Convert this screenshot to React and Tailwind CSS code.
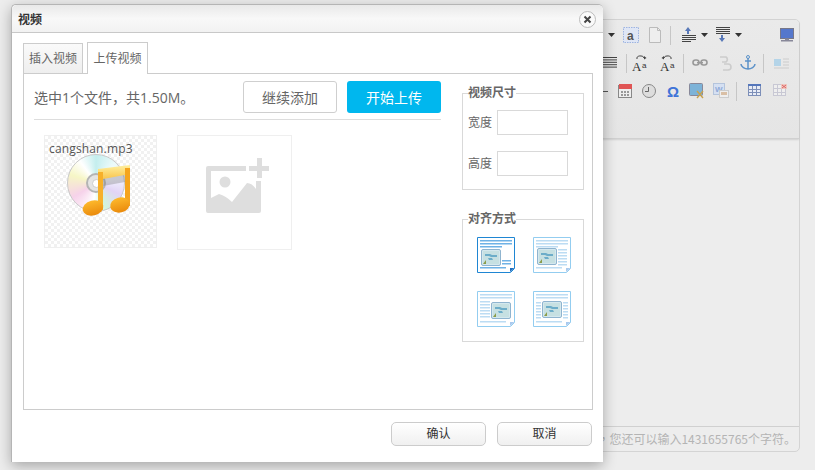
const Sep = ({ className = "" }) => <div className={`w-px h-[19px] bg-[#c6c6c6] shrink-0 ${className}`} />;

const Caret = ({ className = "" }) => (
  <svg width="7" height="4" viewBox="0 0 7 4" className={`shrink-0 ${className}`}><path d="M0 0h7L3.5 4z" fill="#333" /></svg>
);

const I = ({ className = "", children, w = 16, h = 16 }) => (
  <svg width={w} height={h} viewBox={`0 0 ${w} ${h}`} className={`shrink-0 ${className}`}>{children}</svg>
);

const Lines = ({ x = 0, y = 0, w = 14, n = 4, gap = 2, color = "#444" }) => (
  <g fill={color}>{Array.from({ length: n }).map((_, i) => <rect key={i} x={x} y={y + i * gap} width={w} height="1" />)}</g>
);

const AaIcon = ({ flip, className = "" }) => (
  <svg width="16" height="20" viewBox="0 0 16 20" className={`shrink-0 ${className}`}>
    <path d={flip ? "M4 5 a3.5 2.6 0 0 1 7 1" : "M12 5 a3.5 2.6 0 0 0 -7 1"} fill="none" stroke="#444" strokeWidth="1" />
    <path d={flip ? "M4 3v3.5l-2.5-1.5z" : "M12 3v3.5l2.5-1.5z"} fill="#444" />
    <text x="0" y="18" fontSize="13" fontFamily="Liberation Serif" fill="#333">A</text>
    <text x="10" y="15" fontSize="8" fontFamily="Liberation Sans" fill="#333">a</text>
  </svg>
);

const DocFrame = ({ active, children }) => {
  const a = active ? "#1f86d3" : "#93cdf0";
  return (
    <svg width="38" height="36" viewBox="0 0 38 36" className="block">
      <path d="M0.5 0.5h37v31l-4 4h-33z" fill="#fff" stroke={a} />
      <path d="M33 35v-4h4.5z" fill={active ? "#1f6fc0" : "#a9c9ee"} />
      {children}
    </svg>
  );
};

const Pic = ({ x, y }) => (
  <g>
    <rect x={x + .5} y={y + .5} width="19" height="16" rx="1.5" fill="#d4e8ee" stroke="#8fb4cf" />
    <rect x={x + 2} y={y + 2} width="16" height="13" fill="#c6e0e2" />
    <path d={`M${x + 4} ${y + 5}h5l2 1h5v2h-6l-2-1h-4zM${x + 7} ${y + 9}h4l1 2h-4z`} fill="#6cadc9" />
    <path d={`M${x + 2} ${y + 15}l3-4v4z`} fill="#8b9c4a" />
  </g>
);

const L = ({ x, y, w, c = "#b5d8f2" }) => <rect x={x} y={y} width={w} height="1.5" fill={c} />;

const Align = ({ kind, active }) => {
  const c = active ? "#6fb2e6" : "#bcdcf3";
  let body;
  if (kind === 0) body = <>
    <L x={3} y={3} w={32} c={c} /><L x={3} y={6} w={32} c={c} /><L x={3} y={9} w={22} c={c} />
    <Pic x={4} y={12} />
    <L x={25} y={23} w={9} c={c} /><L x={25} y={26} w={9} c={c} /><L x={3} y={30} w={26} c={c} />
  </>;
  if (kind === 1) body = <>
    <L x={3} y={3} w={32} c={c} /><L x={3} y={6} w={32} c={c} /><L x={3} y={9} w={22} c={c} />
    <Pic x={4} y={11} />
    {[12, 15, 18, 21, 24, 27].map(y => <L key={y} x={25} y={y} w={9} c={c} />)}
    <L x={3} y={30} w={26} c={c} />
  </>;
  if (kind === 2) body = <>
    <L x={3} y={3} w={32} c={c} /><L x={3} y={6} w={32} c={c} />
    {[10, 13, 16, 19, 22, 25].map(y => <L key={y} x={3} y={y} w={10} c={c} />)}
    <Pic x={14} y={11} />
    <L x={3} y={30} w={26} c={c} />
  </>;
  if (kind === 3) body = <>
    <L x={3} y={3} w={32} c={c} /><L x={3} y={6} w={32} c={c} />
    {[11, 14, 17, 20, 23, 26].map(y => <g key={y}><L x={3} y={y} w={5} c={c} /><L x={30} y={y} w={5} c={c} /></g>)}
    <Pic x={9} y={10} />
    <L x={3} y={30} w={26} c={c} />
  </>;
  return <DocFrame active={active}>{body}</DocFrame>;
};

const Toolbar = () => (
  <div className="h-[119px] bg-gradient-to-b from-[#eaeaea] to-[#e5e5e5] border-b border-[#d0d0d0] shadow-[0_1px_2px_rgba(0,0,0,0.12)] rounded-t-[4px] pl-[585px] pt-[7px] flex flex-col">
    <div className="flex items-center h-[16px]">
      <Caret className="ml-[7px]" />
      <I className="ml-[8px]">
        <rect x=".5" y=".5" width="15" height="15" fill="#dfe6f5" stroke="#9db4e2" strokeDasharray="1.5 1" />
        <text x="4" y="12.5" fontSize="12" fontWeight="700" fontFamily="Liberation Sans" fill="#555">a</text>
      </I>
      <I className="ml-[8px]"><path d="M2.5.5h8l3 3v12h-11z" fill="#eee" stroke="#bbb" /><path d="M10.5.5v3h3" fill="none" stroke="#bbb" /></I>
      <Sep className="ml-[7px]" />
      <I className="ml-[11px]"><path d="M6 0l3 4H7v3H5V4H3z" fill="#5878b8" /><Lines y={8} n={4} w={14} /><rect x="9" y="14" width="5" height="1" fill="#e8e8e8" /></I>
      <Caret className="ml-[3px]" />
      <I className="ml-[8px]"><Lines y={0} n={4} w={14} /><path d="M6 15l3-4H7V8H5v3H3z" fill="#5878b8" /></I>
      <Caret className="ml-[3px]" />
      <I className="ml-[38px]"><rect x=".5" y="1.5" width="13" height="10" fill="#5577cc" stroke="#778" /><rect x="1" y="13" width="12" height="1.5" fill="#889" /><rect x="5" y="11.5" width="4" height="2" fill="#889" /></I>
    </div>
    <div className="flex items-center h-[16px] mt-[12px]">
      <I className="ml-[2px]" w={14}><Lines y={2} n={5} w={14} gap={2.4} /></I>
      <Sep className="ml-[9px]" />
      <AaIcon className="ml-[5px]" />
      <AaIcon flip className="ml-[12px]" />
      <Sep className="ml-[7px]" />
      <I className="ml-[8px]"><rect x="1" y="5" width="6" height="5" rx="2.5" fill="none" stroke="#999" strokeWidth="1.6" /><rect x="9" y="5" width="6" height="5" rx="2.5" fill="none" stroke="#999" strokeWidth="1.6" /><rect x="5" y="7" width="6" height="1.4" fill="#999" /></I>
      <I className="ml-[9px]"><path d="M3 2h6a3 3 0 0 1 0 5H5M7 9h4a3 3 0 0 1 0 6H6" fill="none" stroke="#ccc" strokeWidth="1.6" /></I>
      <I className="ml-[7px]"><circle cx="8" cy="2" r="1.5" fill="none" stroke="#5c92c9" /><path d="M8 3v11M5 6h6M1 9c0 3 4 5 7 5s7-2 7-5" fill="none" stroke="#5c92c9" strokeWidth="1.5" /></I>
      <Sep className="ml-[7px]" />
      <I className="ml-[10px]"><rect x="0" y="4" width="7" height="7" fill="#b4d4e8" /><path d="M9 4h6M9 7h6M9 10h6M0 13h15" stroke="#ccc" /></I>
    </div>
    <div className="flex items-center h-[16px] mt-[12px]">
      <div className="w-[5px] h-px bg-[#555] ml-[2px]" />
      <I className="ml-[10px]"><rect x=".5" y="2.5" width="13" height="12" fill="#eee" stroke="#888" /><rect x="1" y="1" width="13" height="5" fill="#e05555" /><path d="M3 8h2v2H3zM6 8h2v2H6zM9 8h2v2H9zM3 11h2v2H3zM6 11h2v2H6zM9 11h2v2H9z" fill="#999" /></I>
      <I className="ml-[7px]"><circle cx="8" cy="8" r="6.5" fill="#ddd" stroke="#888" /><path d="M7.5 4v4.5H4" fill="none" stroke="#666" /></I>
      <I className="ml-[8px]"><text x="2" y="14" fontSize="15" fontWeight="700" fontFamily="Liberation Sans" fill="#3f74d8">Ω</text></I>
      <I className="ml-[8px]"><rect x=".5" y=".5" width="13" height="12" rx="1" fill="#7db3d8" stroke="#889" /><path d="M8 8l6 7M14 8l-6 7" stroke="#c9a24c" strokeWidth="1.4" /></I>
      <I className="ml-[8px]"><rect x=".5" y=".5" width="11" height="11" fill="#d5e0f2" stroke="#b4c4dc" /><text x="2" y="9" fontSize="8" fontWeight="700" fontFamily="Liberation Sans" fill="#8fa9d8">W</text><rect x="6.5" y="7.5" width="9" height="7" fill="#eee" stroke="#ccc" /><rect x="8" y="9" width="6" height="3" fill="#d9bfa5" /></I>
      <Sep className="ml-[7px]" />
      <I className="ml-[11px]" w={14}><rect x=".5" y="1.5" width="12" height="11" fill="#e8ecf5" stroke="#7d8fb8" /><rect x="0" y="1" width="13" height="2" fill="#5577bb" /><path d="M4.5 3v10M8.5 3v10M0 6.5h13M0 9.5h13" stroke="#7d8fb8" /></I>
      <I className="ml-[11px]" w={14}><rect x=".5" y="1.5" width="12" height="11" fill="#eee" stroke="#c8c8d4" /><path d="M4.5 1v12M8.5 1v12M0 5.5h13M0 9.5h13" stroke="#c8c8d4" /><rect x="8" y="1" width="6" height="5" fill="#f0c8c0" /><path d="M9 2l4 3M13 2l-4 3" stroke="#d66" /></I>
    </div>
  </div>
);

const DiscIcon = () => (
  <>
    <div className="absolute left-[22px] top-[18px] w-[58px] h-[58px] rounded-full border border-[#c9c9c9] bg-[conic-gradient(#c4eeee,#ecfafa_12%,#f2f2ff_22%,#e2d4f6_32%,#d2f4dc_44%,#ffffff_52%,#f6d2ea_66%,#f6f6c6_80%,#ffffff_90%,#c4eeee)] flex items-center justify-center">
      <div className="w-[20px] h-[20px] rounded-full border-2 border-[#b4b4b4] bg-[#e4e4e4] flex items-center justify-center">
        <div className="w-[9px] h-[9px] rounded-full bg-white border border-[#ccc]" />
      </div>
    </div>
    <svg width="66" height="66" viewBox="0 0 66 66" className="absolute left-[22px] top-[16px]">
      <defs>
        <linearGradient id="hd" x1="0" y1="0" x2="0" y2="1"><stop offset="0" stopColor="#fdb92c" /><stop offset="1" stopColor="#ea8a0c" /></linearGradient>
        <linearGradient id="bm" x1="0" y1="0" x2="0" y2="1"><stop offset="0" stopColor="#fff0a0" /><stop offset="1" stopColor="#f7b52f" /></linearGradient>
      </defs>
      <path d="M36 26l22-4v8l-22 4z" fill="#777" opacity=".35" />
      <path d="M31 17L63 13v9L36 27v5h-5z" fill="url(#bm)" />
      <rect x="31" y="20" width="5" height="38" fill="#f7b02a" />
      <rect x="58" y="16" width="5" height="38" fill="#f5a41e" />
      <ellipse cx="26" cy="56" rx="10.5" ry="7.5" fill="url(#hd)" transform="rotate(-14 26 56)" />
      <ellipse cx="53" cy="53" rx="10" ry="7.5" fill="url(#hd)" transform="rotate(-14 53 53)" />
    </svg>
  </>
);

const AddIcon = () => (
  <svg width="63" height="55" viewBox="0 0 63 55" className="ml-[6px] mb-[14px]">
    <path d="M2 8H40V13H5V40L13 36Q20 38 26 44L41 25Q46 25 50 31V23H55V53a2 2 0 0 1-2 2H2a2 2 0 0 1-2-2V10a2 2 0 0 1 2-2z" fill="#dedede" />
    <circle cx="19" cy="24" r="5.5" fill="#dedede" />
    <path d="M43 8h8V0h5v8h7v5h-7v7h-5v-7h-8z" fill="#dedede" />
  </svg>
);

const Fieldset = ({ title, className = "", children }) => (
  <fieldset className={`border border-[#d9d9d9] w-[122px] ml-0 ${className}`}>
    <legend className="ml-[5px] px-0 text-[12px] leading-[14px] font-bold text-[#666]">{title}</legend>
    {children}
  </fieldset>
);

const Field = ({ label, className = "" }) => (
  <div className={`flex items-center ${className}`}>
    <span className="ml-[5px] w-[29px] text-[12px] text-[#666]">{label}</span>
    <div className="w-[71px] h-[25px] border border-[#d9d9d9] bg-white" />
  </div>
);

export default function App() {
  return (
    <div className="relative w-[815px] h-[470px] overflow-hidden bg-[#ededed] pt-[19px] pl-[15px] font-['Open_Sans','Noto_Sans_CJK_SC',sans-serif]">
      <div className="w-[785px] h-[433px] border border-[#d4d4d4] rounded-[5px] flex flex-col">
        <Toolbar />
        <div className="flex-1" />
        <div className="h-[25px] border-t border-[#d0d0d0] flex items-center justify-end pr-[3px] text-[12px] text-[#b4b4b4] whitespace-nowrap font-['Noto_Sans_CJK_SC',sans-serif]">
          <span className="font-['Noto_Sans_CJK_TC',sans-serif]">，</span>您还可以输入1431655765个字符。
        </div>
      </div>

      <div className="absolute left-[11px] top-[4px] w-[592px] h-[458px] bg-white rounded-t-[5px] border-l border-t border-[#b5b5b5] shadow-[0_4px_14px_rgba(0,0,0,0.3)] flex flex-col">
        <div className="h-[28px] shrink-0 bg-gradient-to-b from-[#e9e9e9] via-[#f8f8f8] to-[#f2f2f2] rounded-t-[5px] border-b border-[#c8c8c8] flex items-center justify-between pt-[2px] pl-[6px] pr-[7px]">
          <span className="text-[12px] font-bold text-[#333] leading-none">视频</span>
          <div className="w-[17px] h-[17px] rounded-full border border-[#bcbcbc] bg-[#fafafa] flex items-center justify-center">
            <svg width="9" height="9" viewBox="0 0 9 9"><path d="M1.5 1.5l6 6M7.5 1.5l-6 6" stroke="#444" strokeWidth="2" /></svg>
          </div>
        </div>

        <div className="flex-1 flex flex-col px-[11px] pt-[9px]">
          <div className="flex h-[32px] items-end gap-[4px] relative z-10">
            <div className="w-[60px] h-[31px] border border-[#ccc] border-b-0 bg-gradient-to-b from-[#fafafa] to-[#eeeeee] text-[12px] text-[#666] flex items-center justify-center shadow-[inset_0_-1px_0_#ccc]">插入视频</div>
            <div className="w-[61px] h-[32px] border border-[#ccc] border-b-0 bg-white text-[12px] text-[#666] flex items-center justify-center">上传视频</div>
          </div>

          <div className="w-[570px] h-[337px] -mt-px border border-[#ccc] flex pl-[10px]">
            <div className="w-[407px] shrink-0">
              <div className="h-[46px] pt-[7px] border-b border-[#ddd] flex items-start">
                <span className="h-[32px] flex items-center text-[14px] text-[#666] whitespace-nowrap">选中1个文件，共1.50M。</span>
                <div className="ml-auto w-[94px] h-[32px] rounded-[3px] border border-[#cfcfcf] bg-white text-[14px] text-[#666] flex items-center justify-center">继续添加</div>
                <div className="ml-[10px] w-[94px] h-[32px] rounded-[3px] bg-[#00b7ee] text-[14px] text-white flex items-center justify-center">开始上传</div>
              </div>
              <div className="flex items-start mt-[15px] ml-[10px] gap-[20px]">
                <div className="relative w-[113px] h-[113px] border border-[#efefef] bg-[repeating-conic-gradient(#f1f1f1_0_25%,#ffffff_0_50%)] bg-[length:6px_6px] overflow-hidden">
                  <DiscIcon />
                  <div className="relative pl-[4px] pt-[5px] text-[12px] leading-[16px] tracking-[0.15px] text-[#555]">cangshan.mp3</div>
                </div>
                <div className="w-[115px] h-[115px] border border-[#efefef] flex items-center justify-center">
                  <AddIcon />
                </div>
              </div>
            </div>
            <div className="ml-[21px] pt-[12px]">
              <Fieldset title="视频尺寸" className="h-[104px]">
                <Field label="宽度" className="mt-[10px]" />
                <Field label="高度" className="mt-[16px]" />
              </Fieldset>
              <Fieldset title="对齐方式" className="h-[130px] mt-[22px]">
                <div className="grid grid-cols-[38px_38px] gap-x-[18px] gap-y-[18px] ml-[14px] mt-[11px]">
                  <Align kind={0} active />
                  <Align kind={1} />
                  <Align kind={2} />
                  <Align kind={3} />
                </div>
              </Fieldset>
            </div>
          </div>

          <div className="flex justify-end gap-[11px] mt-[12px]">
            <div className="w-[95px] h-[24px] rounded-[5px] border border-[#ccc] bg-gradient-to-b from-[#ffffff] to-[#f0f0f0] text-[12px] text-[#333] flex items-center justify-center">确认</div>
            <div className="w-[95px] h-[24px] rounded-[5px] border border-[#ccc] bg-gradient-to-b from-[#ffffff] to-[#f0f0f0] text-[12px] text-[#333] flex items-center justify-center">取消</div>
          </div>
        </div>
      </div>
    </div>
  );
}
